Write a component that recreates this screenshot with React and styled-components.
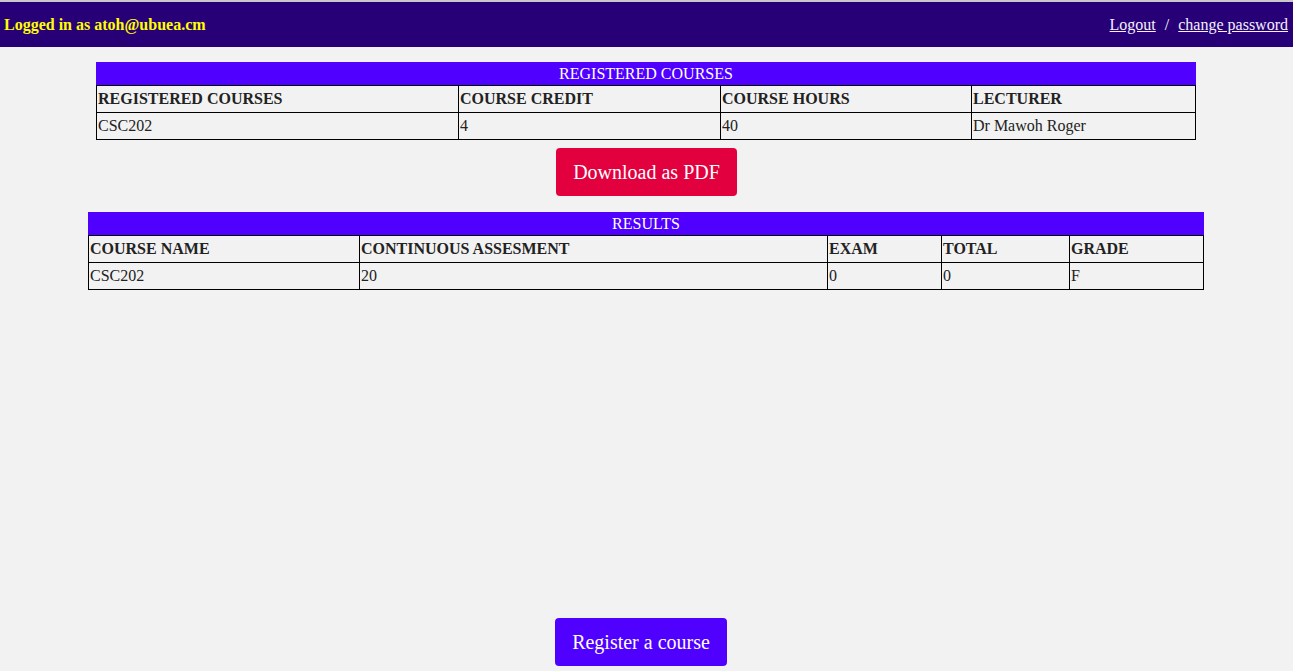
import React from "react";
import styled, { createGlobalStyle } from "styled-components";

const GlobalStyle = createGlobalStyle`
  html, body {
    margin: 0;
    padding: 0;
    background-color: #f2f2f2;
    font-family: "Liberation Serif", "Times New Roman", serif;
  }
`;

const Page = styled.div`
  display: flex;
  flex-direction: column;
  align-items: center;
  height: 100vh;
  box-sizing: border-box;
  border-top: 2px solid #c9c9c9;
  overflow: hidden;
`;

const TopBar = styled.header`
  align-self: stretch;
  display: flex;
  justify-content: space-between;
  align-items: center;
  height: 45px;
  padding: 0 5px 0 4px;
  background-color: #270077;
  font-size: 16px;
`;

const UserLabel = styled.span`
  color: #ffff00;
  font-weight: bold;
`;

const Links = styled.nav`
  display: flex;
  gap: 9px;
  color: #ffffff;
`;

const NavLink = styled.a`
  color: #f4f0ff;
  text-decoration: underline;
  cursor: pointer;
`;

const TableWrap = styled.div`
  margin-top: ${(props) => props.top}px;
  margin-right: 1px;
  width: ${(props) => props.width}px;
`;

const TableTitle = styled.div`
  height: 23px;
  line-height: 23px;
  background-color: #5000ff;
  color: #ffffff;
  text-align: center;
  font-size: 16px;
`;

const Table = styled.table`
  width: calc(100% - 1px);
  border-collapse: collapse;
  table-layout: fixed;
  font-size: 16px;
  color: #222222;
`;

const Th = styled.th`
  height: 27px;
  padding: 0 1px;
  border: 1px solid #000000;
  text-align: left;
  font-weight: bold;
  box-sizing: border-box;
  white-space: nowrap;
`;

const Td = styled.td`
  height: 27px;
  padding: 0 1px;
  border: 1px solid #000000;
  text-align: left;
  box-sizing: border-box;
  white-space: nowrap;
`;

const Button = styled.button`
  height: 48px;
  padding: 0 17px;
  border: none;
  border-radius: 4px;
  background-color: ${(props) => props.bg};
  color: #ffffff;
  font-family: "Liberation Serif", "Times New Roman", serif;
  font-size: 20px;
  cursor: pointer;
`;

const PdfButton = styled(Button)`
  margin-top: 8px;
`;

const RegisterButton = styled(Button)`
  margin-top: auto;
  margin-bottom: 5px;
  margin-right: 11px;
`;

const DataTable = ({ title, width, top, cols, headers, rows }) => (
  <TableWrap width={width} top={top}>
    <TableTitle>{title}</TableTitle>
    <Table>
      <colgroup>
        {cols.map((w, i) => (
          <col key={i} style={{ width: w }} />
        ))}
      </colgroup>
      <thead>
        <tr>
          {headers.map((h) => (
            <Th key={h}>{h}</Th>
          ))}
        </tr>
      </thead>
      <tbody>
        {rows.map((row, i) => (
          <tr key={i}>
            {row.map((cell, j) => (
              <Td key={j}>{cell}</Td>
            ))}
          </tr>
        ))}
      </tbody>
    </Table>
  </TableWrap>
);

const App = () => {
  return (
    <>
      <GlobalStyle />
      <Page>
        <TopBar>
          <UserLabel>Logged in as atoh@ubuea.cm</UserLabel>
          <Links>
            <NavLink>Logout</NavLink>
            <span>/</span>
            <NavLink>change password</NavLink>
          </Links>
        </TopBar>

        <DataTable
          title="REGISTERED COURSES"
          width={1100}
          top={15}
          cols={[362, 262, 251, 224]}
          headers={["REGISTERED COURSES", "COURSE CREDIT", "COURSE HOURS", "LECTURER"]}
          rows={[["CSC202", "4", "40", "Dr Mawoh Roger"]]}
        />

        <PdfButton bg="#e2003f">Download as PDF</PdfButton>

        <DataTable
          title="RESULTS"
          width={1116}
          top={16}
          cols={[271, 468, 114, 128, 134]}
          headers={["COURSE NAME", "CONTINUOUS ASSESMENT", "EXAM", "TOTAL", "GRADE"]}
          rows={[["CSC202", "20", "0", "0", "F"]]}
        />

        <RegisterButton bg="#5000ff">Register a course</RegisterButton>
      </Page>
    </>
  );
};

export default App;
